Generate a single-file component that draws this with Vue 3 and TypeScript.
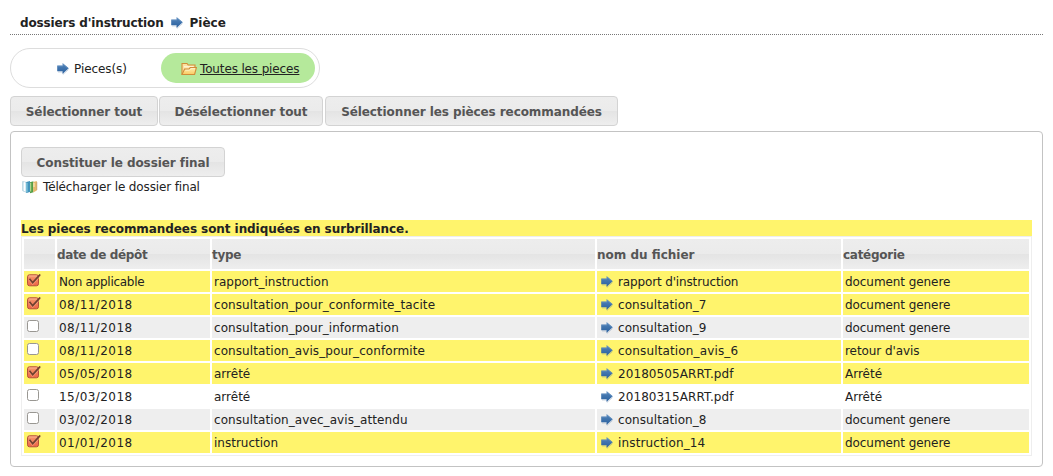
<script setup lang="ts">
import { ref } from 'vue'

interface Piece {
  date: string
  type: string
  file: string
  category: string
  checked: boolean
  tone: 'recommended' | 'odd' | 'even'
}

const pieces = ref<Piece[]>([
  { date: 'Non applicable', type: 'rapport_instruction', file: "rapport d'instruction", category: 'document genere', checked: true, tone: 'recommended' },
  { date: '08/11/2018', type: 'consultation_pour_conformite_tacite', file: 'consultation_7', category: 'document genere', checked: true, tone: 'recommended' },
  { date: '08/11/2018', type: 'consultation_pour_information', file: 'consultation_9', category: 'document genere', checked: false, tone: 'odd' },
  { date: '08/11/2018', type: 'consultation_avis_pour_conformite', file: 'consultation_avis_6', category: "retour d'avis", checked: false, tone: 'recommended' },
  { date: '05/05/2018', type: 'arrêté', file: '20180505ARRT.pdf', category: 'Arrêté', checked: true, tone: 'recommended' },
  { date: '15/03/2018', type: 'arrêté', file: '20180315ARRT.pdf', category: 'Arrêté', checked: false, tone: 'even' },
  { date: '03/02/2018', type: 'consultation_avec_avis_attendu', file: 'consultation_8', category: 'document genere', checked: false, tone: 'odd' },
  { date: '01/01/2018', type: 'instruction', file: 'instruction_14', category: 'document genere', checked: true, tone: 'recommended' },
])

function tracking(text: string): string {
  if (/^\d\d\//.test(text)) return 'wide-3'
  if (text === 'Non applicable') return 'tight-3'
  if (/^rapport d'/.test(text)) return 'tight-2'
  if (/^(document|retour)/.test(text)) return 'tight-1'
  if (/_avis_6|_14/.test(text)) return 'wide-2'
  if (/^consultation|pdf$/.test(text)) return 'wide-1'
  return ''
}

function selectAll(): void {
  pieces.value.forEach((p) => (p.checked = true))
}
function selectNone(): void {
  pieces.value.forEach((p) => (p.checked = false))
}
function selectRecommended(): void {
  pieces.value.forEach((p) => (p.checked = p.tone === 'recommended'))
}
</script>

<template>
  <svg class="defs" aria-hidden="true">
    <defs>
      <linearGradient id="arrow-fill" x1="0" y1="0" x2="0" y2="1">
        <stop offset="0" stop-color="#5687bb" />
        <stop offset="1" stop-color="#285f9e" />
      </linearGradient>
      <linearGradient id="check-fill" x1="0" y1="0" x2="0" y2="1">
        <stop offset="0" stop-color="#f69a72" />
        <stop offset="1" stop-color="#ee6544" />
      </linearGradient>
      <linearGradient id="folder-fill" x1="0" y1="0" x2="0" y2="1">
        <stop offset="0" stop-color="#ffeeb0" />
        <stop offset="1" stop-color="#f9cb62" />
      </linearGradient>
      <symbol id="arrow" viewBox="0 0 12 12">
        <path d="M1 9H6V11.3L11.5 6.6" fill="none" stroke="#5577a0" stroke-opacity=".3" />
        <path d="M.2 2.6H5.6V0L11.8 5.3L5.6 10.8V8.2H.2Z" fill="url(#arrow-fill)" />
        <path d="M.7 3.1H6.1V1.2L10.8 5.3" fill="none" stroke="#7da5cf" stroke-opacity=".45" stroke-width=".8" />
      </symbol>
    </defs>
  </svg>
  <main class="page">
    <h1 class="title">
      <span class="tight-2">dossiers d'instruction</span>
      <svg class="arrow"><use href="#arrow" /></svg>
      <span>Pièce</span>
    </h1>

    <nav class="tabs">
      <a class="tab tab-first"><svg class="arrow"><use href="#arrow" /></svg><span class="tight-1">Pieces(s)</span></a>
      <a class="tab tab-active">
        <svg class="folder" viewBox="0 0 16 14">
          <path d="M1 12.4V1.5H6L7.2 3H14V6" fill="#fbe2a0" stroke="#d18c39" stroke-width="1.1" />
          <path d="M3 4.8H12.5" stroke="#fffbe5" />
          <path d="M1 12.5L3.6 7.1H8L9.2 5.6H15.4L13.6 12.5Z" fill="url(#folder-fill)" stroke="#d18c39" stroke-width="1.1" />
          <path d="M4.3 8.1H8.6L9.8 6.6H14.1" fill="none" stroke="#fff9d5" stroke-width=".8" />
        </svg>
        <span class="link tight-2">Toutes les pieces</span>
      </a>
    </nav>

    <div class="actions">
      <button type="button" class="btn all" @click="selectAll">Sélectionner tout</button>
      <button type="button" class="btn none" @click="selectNone">Désélectionner tout</button>
      <button type="button" class="btn recommended-btn" @click="selectRecommended">Sélectionner les pièces recommandées</button>
    </div>

    <section class="panel">
      <button type="button" class="btn build">Constituer le dossier final</button>
      <a class="download">
        <svg class="books" viewBox="0 0 16 14">
          <path d="M.6 1.5L5 2.6V12.6L.6 10.7Z" fill="#d8edf5" stroke="#a6c9d8" stroke-width=".7" />
          <path d="M2.5 2.2V11.2" stroke="#fff" />
          <path d="M4.3 2L8 1V12L4.3 13Z" fill="#4293bb" />
          <path d="M5 3V12" stroke="#8ad0e5" />
          <path d="M8 2.3L11.4 1.3V12.2L8 13.2Z" fill="#539d47" />
          <path d="M8.7 3V11.5" stroke="#c1e29c" />
          <path d="M11.2 2L14.8 1V10.5L11.2 12.5Z" fill="#e5b96c" />
          <path d="M12 3V7" stroke="#fff0c5" />
          <path d="M14.8 2V10" stroke="#b1864c" stroke-width=".6" />
        </svg>
        <span class="tight-2">Télécharger le dossier final</span>
      </a>
      <p class="notice tight-1">Les pieces recommandees sont indiquées en surbrillance.</p>
      <table class="grid">
        <colgroup>
          <col class="c-check" /><col class="c-date" /><col class="c-type" /><col class="c-file" /><col class="c-cat" />
        </colgroup>
        <thead>
          <tr>
            <th></th>
            <th class="tight-4">date de dépôt</th>
            <th class="tight-3">type</th>
            <th>nom du fichier</th>
            <th class="tight-3">catégorie</th>
          </tr>
        </thead>
        <tbody>
          <tr v-for="(p, i) in pieces" :key="i" :class="p.tone">
            <td class="check-cell" @click="p.checked = !p.checked">
              <svg class="check" viewBox="0 0 15 13">
                <template v-if="p.checked">
                  <rect x=".5" y=".8" width="11" height="11" rx="2" fill="url(#check-fill)" stroke="#b4503b" />
                  <path d="M1.8 2H10" stroke="#ffc19b" stroke-opacity=".7" />
                  <path d="M2.6 5.2L5.7 9.2L12.8 1.3" fill="none" stroke="#ffb294" stroke-width="2.6" stroke-opacity=".55" />
                  <path d="M2.5 4.8L5.7 8.7L13.2 .5" fill="none" stroke="#71402f" stroke-width="1.8" />
                </template>
                <rect v-else x=".5" y=".5" width="11" height="11" rx="2" fill="#fff" stroke="#999792" />
              </svg>
            </td>
            <td :class="tracking(p.date)">{{ p.date }}</td>
            <td :class="tracking(p.type)">{{ p.type }}</td>
            <td>
              <span class="file"><svg class="arrow"><use href="#arrow" /></svg><span :class="tracking(p.file)">{{ p.file }}</span></span>
            </td>
            <td :class="tracking(p.category)">{{ p.category }}</td>
          </tr>
        </tbody>
      </table>
    </section>
  </main>
</template>

<style>
body {
  margin: 0;
  background: #fff;
}
</style>

<style scoped>
.defs {
  position: absolute;
  width: 0;
  height: 0;
}
.page {
  box-sizing: border-box;
  height: 476px;
  padding: 0 10px;
  overflow: hidden;
  font: 12px/16px 'DejaVu Sans', Verdana, sans-serif;
  color: #222;
}
.tight-1 { letter-spacing: -0.07px; }
.tight-2 { letter-spacing: -0.14px; }
.tight-3 { letter-spacing: -0.28px; }
.tight-4 { letter-spacing: -0.36px; }
.wide-1 { letter-spacing: 0.08px; }
.wide-2 { letter-spacing: 0.15px; }
.wide-3 { letter-spacing: 0.44px; }
.arrow {
  flex: none;
  width: 12px;
  height: 12px;
}
.title {
  display: flex;
  align-items: center;
  gap: 7px;
  box-sizing: border-box;
  height: 35px;
  margin: 0;
  padding: 11px 10px 0;
  border-bottom: 1px dotted #777;
  font-size: 12px;
  font-weight: bold;
}
.tabs {
  display: flex;
  align-items: center;
  box-sizing: border-box;
  width: 310px;
  height: 40px;
  margin-top: 13px;
  border: 1px solid #ddd;
  border-radius: 20px;
}
.tab {
  display: flex;
  align-items: center;
  box-sizing: border-box;
  height: 30px;
}
.tab-first {
  gap: 5px;
  width: 150px;
  padding: 1px 0 0 46px;
}
.tab-active {
  gap: 3px;
  width: 154px;
  padding: 1px 0 0 20px;
  border-radius: 15px;
  background: #b5e99b;
}
.folder {
  width: 16px;
  height: 14px;
}
.link {
  text-decoration: underline;
}
.actions {
  display: flex;
  margin-top: 8px;
}
.btn {
  box-sizing: border-box;
  height: 30px;
  padding: 1px 0 0;
  border: 1px solid #d3d3d3;
  border-radius: 4px;
  background: linear-gradient(#ededed 0, #ebebeb 50%, #e4e4e4 51%, #eee 100%);
  color: #555;
  font: bold 12px/16px 'DejaVu Sans', Verdana, sans-serif;
  letter-spacing: -0.08px;
  white-space: nowrap;
}
.all {
  width: 148px;
  margin-right: 1px;
}
.none {
  width: 164px;
  margin-right: 2px;
}
.recommended-btn {
  width: 293px;
}
.panel {
  box-sizing: border-box;
  height: 336px;
  margin-top: 5px;
  padding: 15px 10px 0;
  border: 1px solid #c3c3c3;
  border-radius: 4px;
}
.build {
  display: block;
  width: 204px;
}
.download {
  display: flex;
  align-items: center;
  gap: 5px;
  height: 16px;
  margin-top: 2px;
  padding-left: 1px;
}
.books {
  width: 16px;
  height: 14px;
}
.notice {
  height: 16px;
  margin: 25px 0 0;
  background: #fff46c;
  font-weight: bold;
  line-height: 18px;
}
.grid {
  box-sizing: border-box;
  width: 1011px;
  table-layout: fixed;
  border: 1px solid #eee;
  border-collapse: separate;
  border-spacing: 2px;
}
.c-check { width: 31px; }
.c-date { width: 153px; }
.c-type { width: 383px; }
.c-file { width: 244px; }
.c-cat { width: 186px; }
th {
  box-sizing: border-box;
  height: 30px;
  padding: 2px 0 0;
  background: linear-gradient(#ededed 0, #ebebeb 50%, #e4e4e4 51%, #eee 100%);
  color: #555;
  text-align: left;
}
td {
  box-sizing: border-box;
  height: 21px;
  padding: 1px 2px 0;
  line-height: 16px;
  vertical-align: middle;
}
.recommended td { background: #fff46c; }
.odd td { background: #eee; }
.check-cell {
  padding: 3px 0 0 3px;
  vertical-align: top;
}
.check {
  display: block;
  width: 15px;
  height: 13px;
}
.file {
  display: flex;
  align-items: center;
  gap: 5px;
  padding-left: 2px;
}
</style>
